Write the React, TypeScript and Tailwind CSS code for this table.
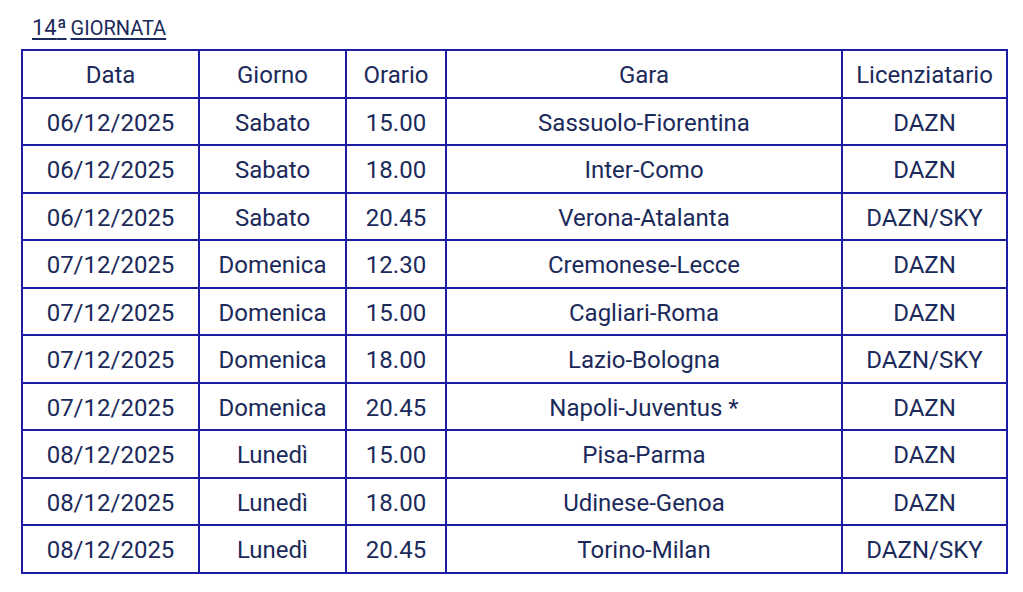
import React from "react"

const rows = [
  ["06/12/2025", "Sabato", "15.00", "Sassuolo-Fiorentina", "DAZN"],
  ["06/12/2025", "Sabato", "18.00", "Inter-Como", "DAZN"],
  ["06/12/2025", "Sabato", "20.45", "Verona-Atalanta", "DAZN/SKY"],
  ["07/12/2025", "Domenica", "12.30", "Cremonese-Lecce", "DAZN"],
  ["07/12/2025", "Domenica", "15.00", "Cagliari-Roma", "DAZN"],
  ["07/12/2025", "Domenica", "18.00", "Lazio-Bologna", "DAZN/SKY"],
  ["07/12/2025", "Domenica", "20.45", "Napoli-Juventus *", "DAZN"],
  ["08/12/2025", "Lunedì", "15.00", "Pisa-Parma", "DAZN"],
  ["08/12/2025", "Lunedì", "18.00", "Udinese-Genoa", "DAZN"],
  ["08/12/2025", "Lunedì", "20.45", "Torino-Milan", "DAZN/SKY"],
]

const headers = ["Data", "Giorno", "Orario", "Gara", "Licenziatario"]
const widths = ["w-[177px]", "w-[147px]", "w-[100px]", "w-[396px]", "w-[165px]"]

export default function App() {
  return (
    <div className="min-h-[592px] bg-white pl-[21px] pt-[15px] text-[#1b2a5a] font-['Roboto',sans-serif]">
      <div className="ml-[11px] h-[34px] leading-[26px]">
        <span className="underline decoration-[1.5px] underline-offset-[3px] text-[#1b2a5a]">
          <span className="text-[22px]">14</span>
          <span className="text-[22px]">ª</span>
          <span className="text-[20px] ml-[4px]">GIORNATA</span>
        </span>
      </div>
      <table className="table-fixed border-collapse border-2 border-[#1d1da4] text-[24px]">
        <thead>
          <tr className="h-[47.5px]">
            {headers.map((h, i) => (
              <th key={h} className={`${widths[i]} border-2 border-[#1d1da4] p-0 pt-[3px] text-center font-normal`}>
                {h}
              </th>
            ))}
          </tr>
        </thead>
        <tbody>
          {rows.map((r, ri) => (
            <tr key={ri} className="h-[47.5px]">
              {r.map((c, ci) => (
                <td key={ci} className="border-2 border-[#1d1da4] p-0 pt-[3px] text-center">
                  {c}
                </td>
              ))}
            </tr>
          ))}
        </tbody>
      </table>
    </div>
  )
}
